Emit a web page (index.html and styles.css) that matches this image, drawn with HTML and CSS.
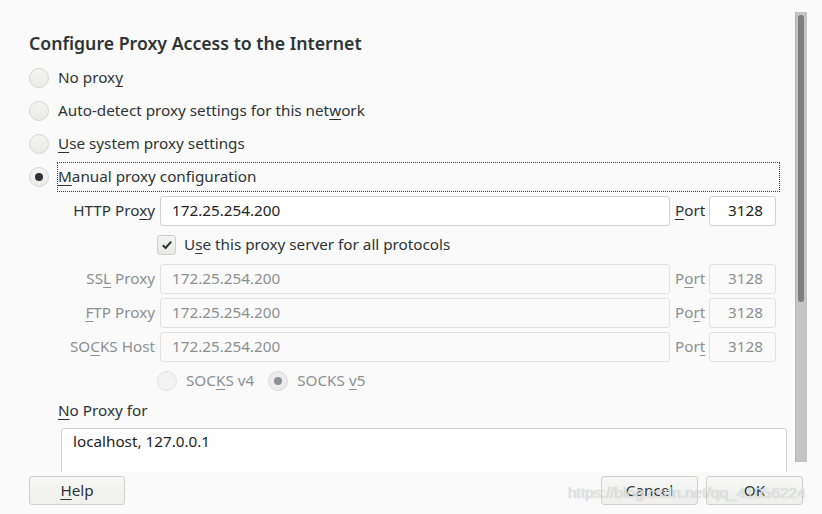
FILE: index.html
```html
<!DOCTYPE html>
<html>
<head>
<meta charset="utf-8">
<link rel="stylesheet" href="styles.css">
</head>
<body>
<div class="window">
  <div class="scrolled">
    <div class="content">
      <div class="title">Configure Proxy Access to the Internet</div>
      <div class="options">
        <div class="opt"><span class="radio"></span><span class="lbl">No prox<u>y</u></span></div>
        <div class="opt"><span class="radio"></span><span class="lbl">Auto-detect proxy settings for this net<u>w</u>ork</span></div>
        <div class="opt"><span class="radio"></span><span class="lbl"><u>U</u>se system proxy settings</span></div>
        <div class="opt"><span class="radio checked"></span><span class="lbl focus"><u>M</u>anual proxy configuration</span></div>
      </div>
      <div class="grid">
        <span class="flabel">HTTP Pro<u>x</u>y</span>
        <div class="input">172.25.254.200</div>
        <span class="plabel"><u>P</u>ort</span>
        <div class="input port">3128</div>

        <div class="checkrow">
          <span class="check"><svg width="12" height="12" viewBox="0 0 12 12"><path d="M1.8 6.2 L4.6 9 L10.2 2.6" fill="none" stroke="#2e3436" stroke-width="2"/></svg></span>
          <span class="ctext">U<u>s</u>e this proxy server for all protocols</span>
        </div>

        <span class="flabel dis">SS<u>L</u> Proxy</span>
        <div class="input dinput">172.25.254.200</div>
        <span class="plabel dis">P<u>o</u>rt</span>
        <div class="input port dinput">3128</div>

        <span class="flabel dis"><u>F</u>TP Proxy</span>
        <div class="input dinput">172.25.254.200</div>
        <span class="plabel dis">Po<u>r</u>t</span>
        <div class="input port dinput">3128</div>

        <span class="flabel dis">SO<u>C</u>KS Host</span>
        <div class="input dinput">172.25.254.200</div>
        <span class="plabel dis">Por<u>t</u></span>
        <div class="input port dinput">3128</div>

        <div class="socksrow">
          <span class="radio disabled"></span><span class="stext v4">SOC<u>K</u>S v4</span>
          <span class="radio disabled dchecked"></span><span class="stext">SOCKS <u>v</u>5</span>
        </div>
      </div>
      <div class="nplabel"><u>N</u>o Proxy for</div>
      <div class="textarea">localhost, 127.0.0.1</div>
    </div>
    <div class="scrollbar"><div class="thumb"></div></div>
  </div>
  <div class="footer">
    <div class="btn help"><u>H</u>elp</div>
    <div class="spacer"></div>
    <div class="btn">Cancel</div>
    <div class="btn">OK</div>
  </div>
  <div class="watermark">https://blog.csdn.net/qq_41056224</div>
</div>
</body>
</html>
```

FILE: styles.css
```css
* { box-sizing: border-box; }
html, body {
  margin: 0;
  padding: 0;
  background: #fafafa;
}
body {
  font-family: "Noto Sans", "DejaVu Sans", sans-serif;
  font-size: 15.25px;
  color: #2e3436;
  width: 822px;
  height: 514px;
  overflow: hidden;
}
u {
  text-decoration: underline;
  text-decoration-thickness: 1px;
  text-underline-offset: 3px;
}
.window {
  position: relative;
  width: 822px;
  height: 514px;
  display: flex;
  flex-direction: column;
}
.scrolled {
  display: flex;
  height: 472px;
  overflow: hidden;
  padding-right: 15px;
}
.content {
  flex: 1;
  padding: 31px 15px 0 29px;
  display: flex;
  flex-direction: column;
}
.title {
  font-size: 17.7px;
  font-weight: 600;
  line-height: 24px;
  height: 24px;
  white-space: nowrap;
}
.options {
  margin-top: 8px;
  display: flex;
  flex-direction: column;
  gap: 3px;
}
.opt {
  display: flex;
  align-items: center;
  height: 30px;
  gap: 8px;
}
.radio {
  flex: none;
  width: 20px;
  height: 20px;
  border-radius: 50%;
  border: 1px solid #d6d6d4;
  background: linear-gradient(#f4f4f3, #ebebea);
  display: flex;
  align-items: center;
  justify-content: center;
}
.radio.checked::after {
  content: "";
  width: 8px;
  height: 8px;
  border-radius: 50%;
  background: #2e3436;
}
.radio.disabled {
  border-color: #e2e2e0;
  background: #f3f3f3;
}
.radio.dchecked {
  background: #ececec;
  border-color: #dadada;
}
.radio.dchecked::after {
  content: "";
  width: 8px;
  height: 8px;
  border-radius: 50%;
  background: #8f9292;
}
.lbl {
  height: 30px;
  line-height: 26px;
  padding-bottom: 2px;
  border: 1px solid transparent;
  white-space: nowrap;
}
.lbl.focus {
  flex: 1;
  border: 1px dotted #3a3f40;
}
.grid {
  margin: 4px 4px 0 32px;
  display: grid;
  grid-template-columns: 94px 1fr 29px 67px;
  grid-auto-rows: 30px;
  column-gap: 5px;
  row-gap: 4px;
  align-items: center;
}
.flabel {
  text-align: right;
  white-space: nowrap;
  padding-bottom: 2px;
}
.plabel {
  white-space: nowrap;
  padding-bottom: 2px;
}
.dis {
  color: #8d9091;
}
.input {
  height: 30px;
  line-height: 26px;
  padding: 0 11px 2px 11px;
  border: 1px solid #d4d2cf;
  border-radius: 3px;
  background: #ffffff;
  white-space: nowrap;
  color: #1f2324;
}
.input.port {
  text-align: right;
  padding-right: 12px;
}
.dinput {
  background: #fafafa;
  border-color: #e2e1df;
  color: #8d9091;
}
.checkrow {
  grid-column: 2 / -1;
  margin-left: -3px;
  display: flex;
  align-items: center;
  gap: 8px;
}
.ctext {
  padding-bottom: 2px;
}
.check {
  width: 19px;
  height: 20px;
  border: 1px solid #d0cfcd;
  border-radius: 3px;
  background: linear-gradient(#f4f4f3, #e8e8e7);
  display: flex;
  align-items: center;
  justify-content: center;
}
.socksrow {
  grid-column: 2 / -1;
  margin-left: -3px;
  display: flex;
  align-items: center;
}
.socksrow .stext {
  color: #8d9091;
  margin-left: 9px;
  padding-bottom: 2px;
}
.socksrow .stext.v4 {
  margin-right: 14px;
}
.nplabel {
  margin: 4px 0 0 29px;
  line-height: 20px;
}
.textarea {
  margin: 8px -7px 0 32px;
  height: 80px;
  flex: none;
  background: #ffffff;
  border: 1px solid #d4d2cf;
  border-radius: 3px 3px 0 0;
  padding: 1px 11px;
  line-height: 22px;
  color: #1f2324;
}
.scrollbar {
  flex: none;
  width: 12px;
  height: 450px;
  margin-top: 12px;
  background: #c3c4c3;
  border-left: 1px solid #b4b5b4;
  padding: 3px 2px 0 2px;
}
.thumb {
  width: 6px;
  height: 287px;
  border-radius: 3px;
  background: #7b7f7f;
}
.footer {
  height: 42px;
  display: flex;
  align-items: flex-start;
  padding: 4px 19px 0 29px;
  gap: 8px;
}
.spacer { flex: 1; }
.btn {
  width: 97px;
  height: 29px;
  line-height: 26px;
  padding-bottom: 1px;
  text-align: center;
  border: 1px solid #d1d0ce;
  border-radius: 3px;
  background: linear-gradient(#f7f7f6, #efefee);
}
.btn.help {
  width: 96px;
}
.watermark {
  position: absolute;
  left: 568px;
  top: 484px;
  font-family: "Liberation Sans", Arial, sans-serif;
  font-size: 15.5px;
  color: rgba(238, 238, 238, 0.9);
  text-shadow: 0 0 1px rgba(110,110,110,0.6);
  white-space: nowrap;
  pointer-events: none;
}
```
